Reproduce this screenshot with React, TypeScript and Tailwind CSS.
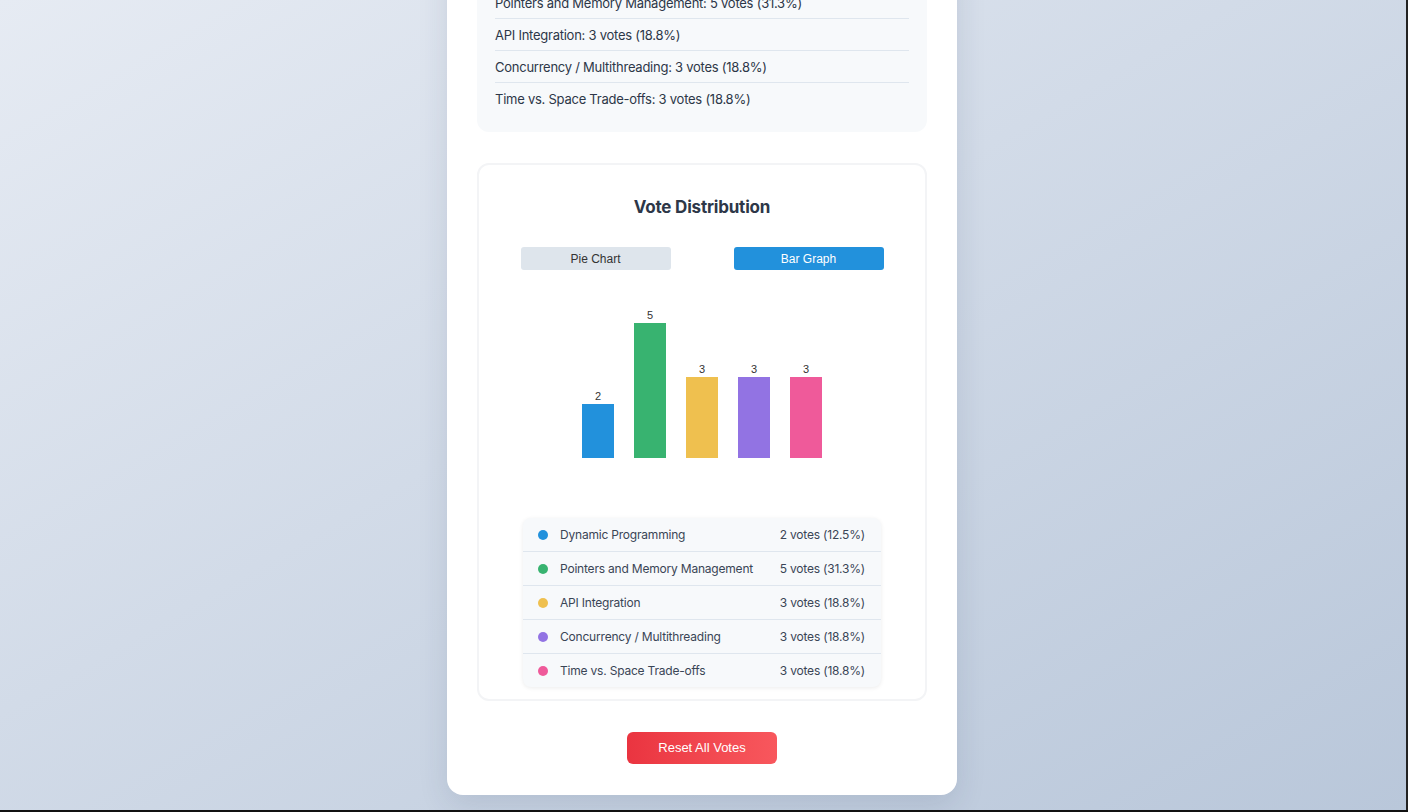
import React from "react";

const data = [
  { name: "Dynamic Programming", votes: 2, pct: "12.5%", color: "#2291dc" },
  { name: "Pointers and Memory Management", votes: 5, pct: "31.3%", color: "#38b370" },
  { name: "API Integration", votes: 3, pct: "18.8%", color: "#efc04f" },
  { name: "Concurrency / Multithreading", votes: 3, pct: "18.8%", color: "#9273e3" },
  { name: "Time vs. Space Trade-offs", votes: 3, pct: "18.8%", color: "#ef5a9a" },
];

function BarChart() {
  const baseY = 168;
  const unit = 27;
  return (
    <svg width={446} height={198} viewBox="0 0 446 198" className="block">
      {data.map((d, i) => {
        const x = 103 + i * 52;
        const h = d.votes * unit;
        return (
          <g key={d.name}>
            <rect x={x} y={baseY - h} width={32} height={h} fill={d.color} />
            <text
              x={x + 16}
              y={baseY - h - 4}
              textAnchor="middle"
              fontSize="11"
              fill="#333"
              fontFamily="'Liberation Sans', Arial, sans-serif"
            >
              {d.votes}
            </text>
          </g>
        );
      })}
    </svg>
  );
}

export default function App() {
  return (
    <div className="h-screen w-full flex flex-col overflow-hidden font-['Inter',sans-serif]">
      <div className="flex-1 min-h-0 flex flex-row">
        <div className="flex-1 min-w-0 flex flex-col justify-end items-center pb-[15px] pr-[2px] bg-linear-to-br from-[#e6ebf3] to-[#b9c7da] overflow-hidden">
          <div className="shrink-0 w-[510px] bg-white rounded-2xl px-[30px] pt-[30px] pb-[31px] shadow-[0_10px_30px_rgba(30,50,80,0.12)]">
            <div className="rounded-xl bg-[#f7f9fb] px-[18px] pt-[16px] pb-[17px] text-[13px] tracking-[-0.25px] text-[#2d3748]">
              <h3 className="text-[16px] font-semibold mb-2">Current Results</h3>
              <div className="h-[32px] pt-[2px] flex items-center border-b border-[#dfe6ee]">
                Dynamic Programming: 2 votes (12.5%)
              </div>
              <div className="h-[32px] pt-[2px] flex items-center border-b border-[#dfe6ee]">
                Pointers and Memory Management: 5 votes (31.3%)
              </div>
              <div className="h-[32px] pt-[2px] flex items-center border-b border-[#dfe6ee]">
                API Integration: 3 votes (18.8%)
              </div>
              <div className="h-[32px] pt-[2px] flex items-center border-b border-[#dfe6ee]">
                Concurrency / Multithreading: 3 votes (18.8%)
              </div>
              <div className="h-[32px] pt-[2px] flex items-center">
                Time vs. Space Trade-offs: 3 votes (18.8%)
              </div>
            </div>

            <div className="mt-[31px] rounded-xl border-2 border-[#f3f4f6] pt-[28px] pb-[12px] flex flex-col items-center">
              <h2 className="text-[17px] leading-[28px] font-bold tracking-[-0.2px] text-[#2d3748]">Vote Distribution</h2>
              <div className="mt-[26px] flex flex-row gap-[63px] font-['Liberation_Sans',Arial,sans-serif]">
                <button className="w-[150px] h-[23px] rounded-[3px] bg-[#dee5ec] text-[12px] text-[#333]">
                  Pie Chart
                </button>
                <button className="w-[150px] h-[23px] rounded-[3px] bg-[#2291dc] text-[12px] text-white">
                  Bar Graph
                </button>
              </div>
              <div className="mt-[20px]">
                <BarChart />
              </div>
              <div className="mt-[30px] w-[358px] rounded-lg bg-[#f7f9fb] shadow-[0_1px_4px_rgba(0,0,0,0.08)]">
                {data.map((d, i) => (
                  <div
                    key={d.name}
                    className={
                      "flex items-center pl-[15px] pr-[16px] text-[12px] tracking-[-0.2px] text-[#3a4556] " +
                      (i < data.length - 1 ? "h-[34px] border-b border-[#dfe6ee]" : "h-[33px]")
                    }
                  >
                    <span
                      className="w-[10px] h-[10px] rounded-full shrink-0"
                      style={{ backgroundColor: d.color }}
                    />
                    <span className="ml-[12px] flex-1">{d.name}</span>
                    <span>
                      {d.votes} votes ({d.pct})
                    </span>
                  </div>
                ))}
              </div>
            </div>

            <div className="mt-[31px] flex justify-center">
              <button className="w-[150px] h-[32px] rounded-md bg-linear-to-r from-[#ea3440] to-[#f8575d] text-white text-[13px] font-['Liberation_Sans',Arial,sans-serif]">
                Reset All Votes
              </button>
            </div>
          </div>
        </div>
        <div className="w-[2px] bg-[#222]" />
      </div>
      <div className="h-[2px] bg-[#111]" />
    </div>
  );
}
